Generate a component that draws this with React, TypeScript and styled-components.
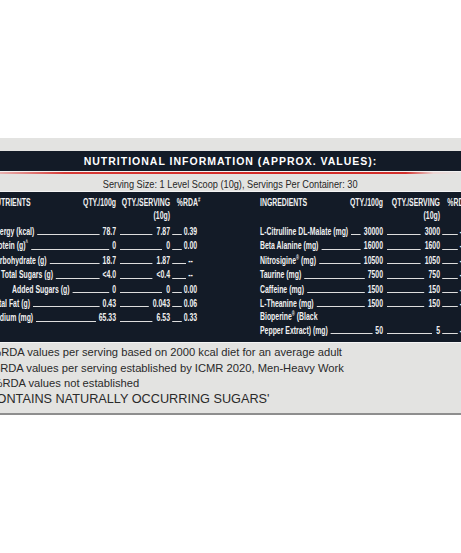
import styled, { createGlobalStyle } from "styled-components";

const GlobalStyle = createGlobalStyle`
  html, body {
    margin: 0;
    padding: 0;
    background: #ffffff;
    width: 461px;
    height: 553px;
    overflow: hidden;
  }
`;

const NAVY = "#131b27";
const PAPER = "#e3e3e1";
const SANS = `"Liberation Sans", Arial, sans-serif`;
// no condensed face is installed, so the DIN-condensed look is made by squeezing
const SQUEEZE = 0.6;
const u = (px: number) => px / SQUEEZE;

const Page = styled.div`
  padding-top: 138px;
  width: 461px;
`;

const Panel = styled.div`
  width: 100%;
  overflow: hidden;
  background: ${PAPER};
`;

const TopStrip = styled.div`
  height: 13px;
`;

const TitleBar = styled.div`
  height: 20px;
  background: ${NAVY};
  color: #ffffff;
  font-family: ${SANS};
  font-weight: 700;
  font-size: 10.5px;
  letter-spacing: 1px;
  line-height: 20px;
  text-align: center;
`;

const RedRule = styled.div`
  height: 2px;
  border-top: 1px solid #f2f2f2;
  background: linear-gradient(
    90deg,
    #e9b3b1 0%,
    #d63a36 14%,
    #d22824 60%,
    #d3302c 88%,
    #ecd6d4 94%,
    ${PAPER} 100%
  );
`;

const ServingBar = styled.div`
  height: 17px;
  line-height: 17px;
  text-align: center;
  border-bottom: 1px solid #f4f4f4;
`;

const ServingText = styled.span`
  display: inline-block;
  color: #262626;
  font-family: ${SANS};
  font-size: 11.5px;
  transform: scaleX(0.8);
  white-space: nowrap;
`;

const Table = styled.div`
  background: ${NAVY};
  padding: 4px 0 5px;
  color: #f1f1f1;
  font-family: ${SANS};
  font-weight: 700;
  font-size: 11.5px;
`;

const TableInner = styled.div`
  display: flex;
  width: max-content;
  gap: ${u(53)}px;
  margin-left: -9px;
  transform: scaleX(${SQUEEZE});
  transform-origin: 0 0;
`;

const Block = styled.div<{ $a: number; $b: number; $c: number }>`
  display: grid;
  grid-template-columns: ${({ $a, $b, $c }) => `${u($a)}px ${u($b)}px ${u($c)}px`};
  align-content: start;
`;

const HeadCell = styled.div<{ $align?: string }>`
  display: flex;
  justify-content: ${({ $align }) => $align || "flex-start"};
  align-items: flex-start;
  text-align: right;
  line-height: 13px;
  padding-bottom: 2px;
  white-space: nowrap;
`;

const Cell = styled.div<{ $lh: number }>`
  display: flex;
  align-items: flex-end;
  line-height: ${({ $lh }) => $lh}px;
  white-space: nowrap;
`;

const Name = styled.span<{ $indent?: number }>`
  padding-left: ${({ $indent }) => u($indent || 0)}px;
`;

const Leader = styled.span<{ $gap: number }>`
  flex: 1;
  min-width: ${u(3)}px;
  margin: 0 ${({ $gap }) => u($gap)}px 3px;
  border-bottom: 1px solid #dedede;
`;

const Rda = styled(Cell)`
  &::after {
    content: "";
    flex: 1;
  }
`;

const Sup = styled.sup`
  font-size: 0.6em;
  vertical-align: 0.55em;
  line-height: 0;
`;

const Footer = styled.div`
  border-top: 1px solid #f5f5f5;
  border-bottom: 2px solid #8e8e8e;
  padding: 2px 0 7px;
  color: #2a2a2a;
  font-family: ${SANS};
  margin-left: -15px;
`;

const Note = styled.div<{ $big?: boolean }>`
  font-size: ${({ $big }) => ($big ? "12.7px" : "11.2px")};
  line-height: ${({ $big }) => ($big ? "14px" : "15.5px")};
  white-space: nowrap;
`;

type Row = {
  name: React.ReactNode;
  q: string;
  s: string;
  r: string;
  indent?: number;
  lh?: number;
};

const nutrients: Row[] = [
  { name: "Energy (kcal)", q: "78.7", s: "7.87", r: "0.39" },
  { name: <>Protein (g)<Sup>^</Sup></>, q: "0", s: "0", r: "0.00" },
  { name: "Carbohydrate (g)", q: "18.7", s: "1.87", r: "--" },
  { name: "Total Sugars (g)", q: "<4.0", s: "<0.4", r: "--", indent: 10 },
  { name: "Added Sugars (g)", q: "0", s: "0", r: "0.00", indent: 21 },
  { name: "Total Fat (g)", q: "0.43", s: "0.043", r: "0.06" },
  { name: "Sodium (mg)", q: "65.33", s: "6.53", r: "0.33" },
];

const ingredients: Row[] = [
  { name: "L-Citrulline DL-Malate (mg)", q: "30000", s: "3000", r: "-" },
  { name: "Beta Alanine (mg)", q: "16000", s: "1600", r: "-" },
  { name: <>Nitrosigine<Sup>®</Sup> (mg)</>, q: "10500", s: "1050", r: "-" },
  { name: "Taurine (mg)", q: "7500", s: "750", r: "-" },
  { name: "Caffeine (mg)", q: "1500", s: "150", r: "-" },
  { name: "L-Theanine (mg)", q: "1500", s: "150", r: "-" },
  {
    name: (
      <>
        Bioperine<Sup>®</Sup> (Black
        <br />
        Pepper Extract) (mg)
      </>
    ),
    q: "50",
    s: "5",
    r: "-",
    lh: 13.5,
  },
];

function Rows({ rows }: { rows: Row[] }) {
  return (
    <>
      {rows.map((row, i) => {
        const lh = row.lh || 14.4;
        return [
          <Cell key={`a${i}`} $lh={lh}>
            <Name $indent={row.indent}>{row.name}</Name>
            <Leader $gap={3} />
            <span>{row.q}</span>
          </Cell>,
          <Cell key={`b${i}`} $lh={lh}>
            <Leader $gap={4} />
            <span>{row.s}</span>
          </Cell>,
          <Rda key={`c${i}`} $lh={lh}>
            <Leader $gap={2} />
            <span>{row.r}</span>
          </Rda>,
        ];
      })}
    </>
  );
}

function Head({ first }: { first: string }) {
  return (
    <>
      <HeadCell $align="space-between">
        <span>{first}</span>
        <span>QTY./100g</span>
      </HeadCell>
      <HeadCell $align="flex-end">
        <span>
          QTY./SERVING
          <br />
          (10g)
        </span>
      </HeadCell>
      <HeadCell $align="center">
        <span>
          %RDA<Sup>#</Sup>
        </span>
      </HeadCell>
    </>
  );
}

export default function App() {
  return (
    <>
      <GlobalStyle />
      <Page>
        <Panel>
          <TopStrip />
          <TitleBar>NUTRITIONAL INFORMATION (APPROX. VALUES):</TitleBar>
          <RedRule />
          <ServingBar>
            <ServingText>
              Serving Size: 1 Level Scoop (10g), Servings Per Container: 30
            </ServingText>
          </ServingBar>
          <Table>
            <TableInner>
              <Block $a={125} $b={54} $c={37}>
                <Head first="NUTRIENTS" />
                <Rows rows={nutrients} />
              </Block>
              <Block $a={123} $b={57} $c={38}>
                <Head first="INGREDIENTS" />
                <Rows rows={ingredients} />
              </Block>
            </TableInner>
          </Table>
          <Footer>
            <Note>#%RDA values per serving based on 2000 kcal diet for an average adult</Note>
            <Note>^%RDA values per serving established by ICMR 2020, Men-Heavy Work</Note>
            <Note>--%RDA values not established</Note>
            <Note $big>'CONTAINS NATURALLY OCCURRING SUGARS'</Note>
          </Footer>
        </Panel>
      </Page>
    </>
  );
}
